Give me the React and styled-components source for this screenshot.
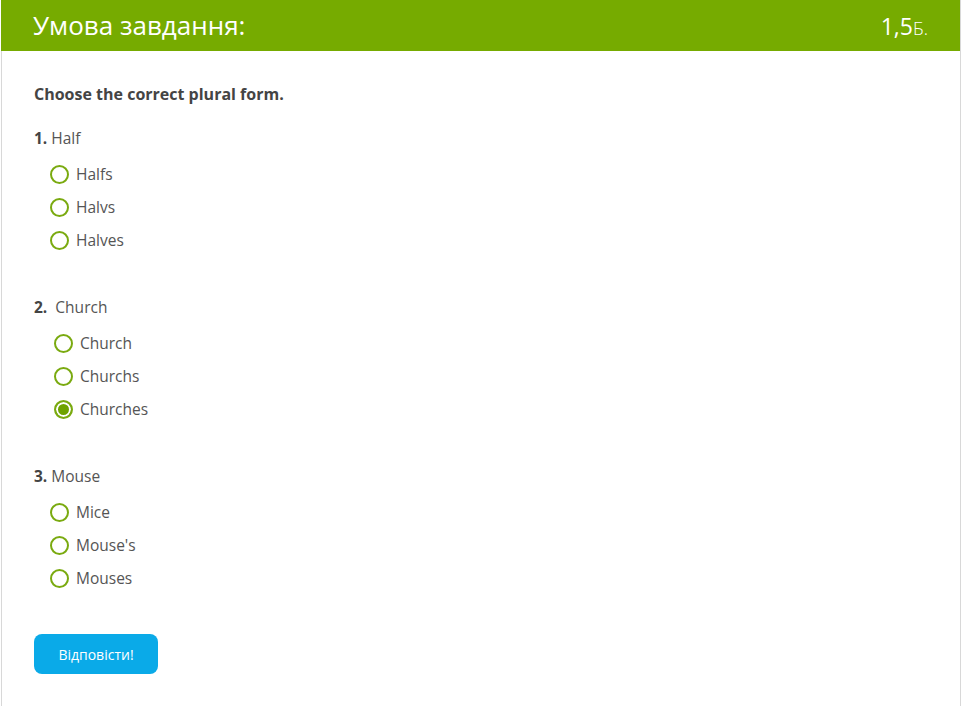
import React, { useState } from "react";
import styled, { createGlobalStyle } from "styled-components";

const questions = [
  { num: "1.", title: "Half", options: ["Halfs", "Halvs", "Halves"], indent: 0 },
  { num: "2.", title: " Church", options: ["Church", "Churchs", "Churches"], indent: 4, selected: 2 },
  { num: "3.", title: "Mouse", options: ["Mice", "Mouse's", "Mouses"], indent: 0 },
];

const App = () => {
  const [answers, setAnswers] = useState(questions.map((q) => q.selected ?? -1));

  const onPick = (qi, oi) => {
    setAnswers((prev) => prev.map((v, i) => (i === qi ? oi : v)));
  };

  return (
    <>
      <GlobalStyle />
      <Card>
        <Header>
          <HeaderTitle>Умова завдання:</HeaderTitle>
          <Score>
            1,5<small>Б.</small>
          </Score>
        </Header>
        <Body>
          <Instruction>Choose the correct plural form.</Instruction>
          {questions.map((q, qi) => (
            <Question key={q.num}>
              <QuestionTitle>
                <b>{q.num}</b> {q.title}
              </QuestionTitle>
              <Options $indent={q.indent}>
                {q.options.map((opt, oi) => (
                  <Option key={opt} onClick={() => onPick(qi, oi)}>
                    <Radio $checked={answers[qi] === oi} />
                    {opt}
                  </Option>
                ))}
              </Options>
            </Question>
          ))}
          <SubmitButton>Відповісти!</SubmitButton>
        </Body>
      </Card>
    </>
  );
};

const GlobalStyle = createGlobalStyle`
  body {
    margin: 0;
    background: #fff;
    font-family: "Open Sans", "Liberation Sans", sans-serif;
    color: #444;
  }
`;

const Card = styled.div`
  width: 960px;
  margin-left: 1px;
  min-height: 706px;
  border-left: 1px solid #d8d8d8;
  border-right: 1px solid #d8d8d8;
  box-sizing: border-box;
`;

const Header = styled.div`
  height: 51px;
  background: #76ab00;
  display: flex;
  align-items: center;
  justify-content: space-between;
  padding: 0 32px;
  margin-left: -1px;
  color: #fff;
`;

const HeaderTitle = styled.div`
  font-size: 26px;
  font-weight: 400;
  margin-top: -1px;
`;

const Score = styled.div`
  font-size: 23px;
  small {
    font-size: 18px;
    font-weight: 300;
  }
`;

const Body = styled.div`
  padding: 32px 32px 30px 32px;
`;

const Instruction = styled.div`
  font-size: 16px;
  font-weight: 700;
  color: #444;
  line-height: 22px;
  margin-bottom: 22px;
`;

const Question = styled.div`
  margin-bottom: 45px;
`;

const QuestionTitle = styled.div`
  font-size: 15.5px;
  line-height: 22px;
  color: #555;
  white-space: pre;
  b {
    color: #444;
  }
`;

const Options = styled.div`
  padding-left: ${(p) => 16 + p.$indent}px;
  padding-top: 14px;
  display: flex;
  flex-direction: column;
  gap: 11px;
`;

const Option = styled.label`
  display: flex;
  align-items: center;
  gap: 7px;
  font-size: 15.5px;
  line-height: 22px;
  color: #555;
  cursor: pointer;
`;

const Radio = styled.span`
  width: 19px;
  height: 19px;
  box-sizing: border-box;
  border-radius: 50%;
  border: 2px solid #7aaa10;
  background: ${(p) => (p.$checked ? "#6ea300" : "#fff")};
  box-shadow: ${(p) => (p.$checked ? "inset 0 0 0 2px #fff" : "none")};
  flex-shrink: 0;
`;

const SubmitButton = styled.button`
  display: block;
  margin-top: 1px;
  width: 124px;
  height: 40px;
  border: none;
  border-radius: 8px;
  background: #0aaae8;
  color: #fff;
  font-family: "Open Sans", "Liberation Sans", sans-serif;
  font-size: 14px;
  cursor: pointer;
`;

export default App;
